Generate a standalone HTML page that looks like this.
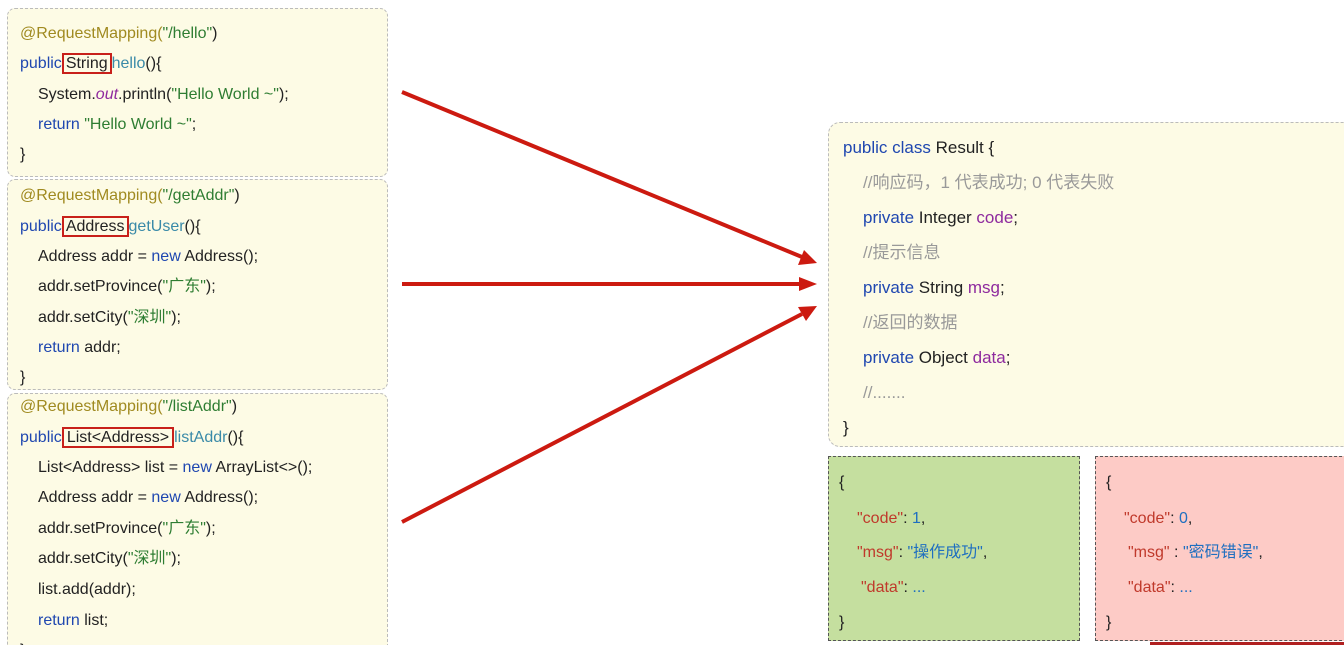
<!DOCTYPE html>
<html style="overflow:hidden;height:645px"><head><meta charset="utf-8"><style>
body{margin:0;width:1344px;height:645px;background:#fff;position:relative;overflow:hidden;font-family:"Liberation Sans","Noto Sans CJK SC",sans-serif;font-size:16px;color:#222}
.box{position:absolute;border:1px dashed #bbb;border-radius:8px;background:#fdfbe5}
.l{position:absolute;line-height:30px;height:30px;white-space:pre}
.k{color:#1f47b0}.s{color:#2e7d32}.a{color:#a08a20}.m{color:#3a8aa8}.p{color:#8e2a9e}.c{color:#999}.r{color:#c0392b}.n{color:#1f6fc0}
.rb{border:2px solid #c8201a;padding:0 2px}
</style></head><body>
<div class="box" style="left:7px;top:8px;width:379px;height:167px"></div>
<div class="box" style="left:7px;top:179px;width:379px;height:209px"></div>
<div class="box" style="left:7px;top:393px;width:379px;height:270px"></div>
<div class="box" style="left:828px;top:122px;width:530px;height:323px;border-radius:12px"></div>
<div style="position:absolute;left:828px;top:456px;width:250px;height:183px;background:#c5df9f;border:1px dashed #555"></div>
<div style="position:absolute;left:1095px;top:456px;width:260px;height:183px;background:#fdcbc6;border:1px dashed #555"></div>

<div class="l a" style="left:20px;top:19px">@RequestMapping(<span class="s">"/hello"</span><span style="color:#222">)</span></div>
<div class="l" style="left:20px;top:49px"><span class="k">public</span><span class="rb">String</span><span class="m">hello</span>(){</div>
<div class="l" style="left:38px;top:80px">System.<i class="p">out</i>.println(<span class="s">"Hello World ~"</span>);</div>
<div class="l" style="left:38px;top:110px"><span class="k">return</span> <span class="s">"Hello World ~"</span>;</div>
<div class="l" style="left:20px;top:140px">}</div>

<div class="l a" style="left:20px;top:181px">@RequestMapping(<span class="s">"/getAddr"</span><span style="color:#222">)</span></div>
<div class="l" style="left:20px;top:212px"><span class="k">public</span><span class="rb">Address</span><span class="m">getUser</span>(){</div>
<div class="l" style="left:38px;top:242px">Address addr = <span class="k">new</span> Address();</div>
<div class="l" style="left:38px;top:272px">addr.setProvince(<span class="s">"广东"</span>);</div>
<div class="l" style="left:38px;top:303px">addr.setCity(<span class="s">"深圳"</span>);</div>
<div class="l" style="left:38px;top:333px"><span class="k">return</span> addr;</div>
<div class="l" style="left:20px;top:363px">}</div>

<div class="l a" style="left:20px;top:392px">@RequestMapping(<span class="s">"/listAddr"</span><span style="color:#222">)</span></div>
<div class="l" style="left:20px;top:423px"><span class="k">public</span><span class="rb" style="padding:0 3px">List&lt;Address&gt;</span><span class="m">listAddr</span>(){</div>
<div class="l" style="left:38px;top:453px">List&lt;Address&gt; list = <span class="k">new</span> ArrayList&lt;&gt;();</div>
<div class="l" style="left:38px;top:483px">Address addr = <span class="k">new</span> Address();</div>
<div class="l" style="left:38px;top:514px">addr.setProvince(<span class="s">"广东"</span>);</div>
<div class="l" style="left:38px;top:544px">addr.setCity(<span class="s">"深圳"</span>);</div>
<div class="l" style="left:38px;top:575px">list.add(addr);</div>
<div class="l" style="left:38px;top:606px"><span class="k">return</span> list;</div>
<div class="l" style="left:20px;top:636px">}</div>

<div style="font-size:17px">
<div class="l" style="left:843px;top:133px"><span class="k">public class</span> Result {</div>
<div class="l c" style="left:863px;top:168px">//响应码，1 代表成功; 0 代表失败</div>
<div class="l" style="left:863px;top:203px"><span class="k">private</span> Integer <span class="p">code</span>;</div>
<div class="l c" style="left:863px;top:238px">//提示信息</div>
<div class="l" style="left:863px;top:273px"><span class="k">private</span> String <span class="p">msg</span>;</div>
<div class="l c" style="left:863px;top:308px">//返回的数据</div>
<div class="l" style="left:863px;top:343px"><span class="k">private</span> Object <span class="p">data</span>;</div>
<div class="l c" style="left:863px;top:378px">//.......</div>
<div class="l" style="left:843px;top:413px">}</div>
</div>

<div class="l" style="left:839px;top:468px">{</div>
<div class="l" style="left:857px;top:504px"><span class="r">"code"</span>: <span class="n">1</span>,</div>
<div class="l" style="left:857px;top:538px"><span class="r">"msg"</span>: <span class="n">"操作成功"</span>,</div>
<div class="l" style="left:861px;top:573px"><span class="r">"data"</span>: <span class="n">...</span></div>
<div class="l" style="left:839px;top:608px">}</div>

<div class="l" style="left:1106px;top:468px">{</div>
<div class="l" style="left:1124px;top:504px"><span class="r">"code"</span>: <span class="n">0</span>,</div>
<div class="l" style="left:1128px;top:538px"><span class="r">"msg"</span> : <span class="n">"密码错误"</span>,</div>
<div class="l" style="left:1128px;top:573px"><span class="r">"data"</span>: <span class="n">...</span></div>
<div class="l" style="left:1106px;top:608px">}</div>
<div style="position:absolute;left:1150px;top:642px;width:194px;height:3px;background:#b02020"></div>

<svg style="position:absolute;left:0;top:0" width="1344" height="645">
<g stroke="#cc1a10" stroke-width="4" fill="#cc1a10">
<line x1="402" y1="92" x2="802" y2="257"/>
<line x1="402" y1="284" x2="800" y2="284"/>
<line x1="402" y1="522" x2="802" y2="314"/>
</g>
<g fill="#cc1a10">
<polygon points="817,263 798,265 804,250"/>
<polygon points="817,284 799,277 799,291"/>
<polygon points="817,306 806,321 798,307"/>
</g>
</svg>
</body></html>
